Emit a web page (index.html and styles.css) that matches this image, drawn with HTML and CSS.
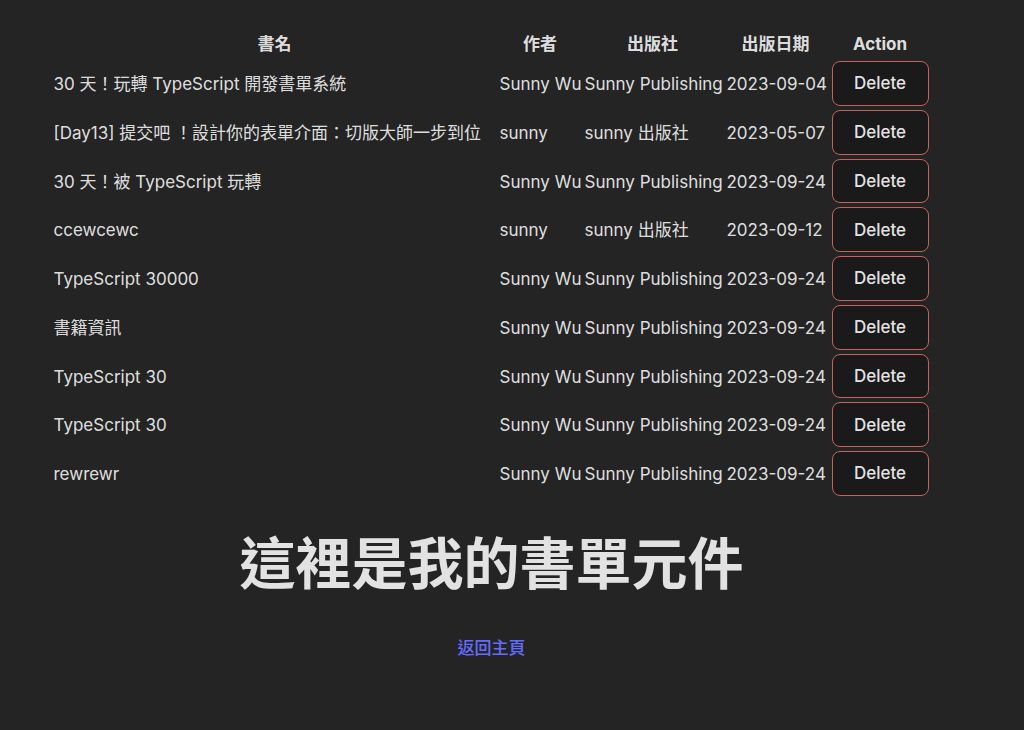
FILE: index.html
```html
<!DOCTYPE html>
<html lang="zh-Hant">
<head>
<meta charset="utf-8">
<title>書單</title>
<link rel="stylesheet" href="styles.css">
</head>
<body>
<div class="page">
  <table class="books">
    <colgroup>
      <col class="c-title"><col class="c-author"><col class="c-pub"><col class="c-date"><col class="c-act">
    </colgroup>
    <thead>
      <tr><th>書名</th><th>作者</th><th>出版社</th><th>出版日期</th><th>Action</th></tr>
    </thead>
    <tbody>
      <tr><td>30 天！玩轉 TypeScript 開發書單系統</td><td>Sunny Wu</td><td>Sunny Publishing</td><td class="date">2023-09-04</td><td class="act"><button class="del">Delete</button></td></tr>
      <tr><td>[Day13] 提交吧 ！設計你的表單介面：切版大師一步到位</td><td>sunny</td><td>sunny 出版社</td><td class="date">2023-05-07</td><td class="act"><button class="del">Delete</button></td></tr>
      <tr><td>30 天！被 TypeScript 玩轉</td><td>Sunny Wu</td><td>Sunny Publishing</td><td class="date">2023-09-24</td><td class="act"><button class="del">Delete</button></td></tr>
      <tr><td>ccewcewc</td><td>sunny</td><td>sunny 出版社</td><td class="date">2023-09-12</td><td class="act"><button class="del">Delete</button></td></tr>
      <tr><td>TypeScript 30000</td><td>Sunny Wu</td><td>Sunny Publishing</td><td class="date">2023-09-24</td><td class="act"><button class="del">Delete</button></td></tr>
      <tr><td>書籍資訊</td><td>Sunny Wu</td><td>Sunny Publishing</td><td class="date">2023-09-24</td><td class="act"><button class="del">Delete</button></td></tr>
      <tr><td>TypeScript 30</td><td>Sunny Wu</td><td>Sunny Publishing</td><td class="date">2023-09-24</td><td class="act"><button class="del">Delete</button></td></tr>
      <tr><td>TypeScript 30</td><td>Sunny Wu</td><td>Sunny Publishing</td><td class="date">2023-09-24</td><td class="act"><button class="del">Delete</button></td></tr>
      <tr><td>rewrewr</td><td>Sunny Wu</td><td>Sunny Publishing</td><td class="date">2023-09-24</td><td class="act"><button class="del">Delete</button></td></tr>
    </tbody>
  </table>
  <h1 class="title">這裡是我的書單元件</h1>
  <a class="home" href="#">返回主頁</a>
</div>
</body>
</html>
```
FILE: styles.css
```css
html, body {
  margin: 0;
  padding: 0;
  background: #242424;
}
body {
  color: rgba(255, 255, 255, 0.87);
  font-family: Inter, "Noto Sans CJK TC", sans-serif;
  font-size: 17px;
  line-height: 1.5;
  min-height: 730px;
}
.page {
  width: 983px;
  display: flex;
  flex-direction: column;
  align-items: center;
  padding-top: 28px;
}
.books {
  table-layout: fixed;
  width: 882px;
  border-collapse: separate;
  border-spacing: 2px;
}
.c-title { width: 444px; }
.c-author { width: 83px; }
.c-pub { width: 138px; }
.c-date { width: 104px; }
.c-act { width: 101px; }
.books th {
  font-weight: 700;
  text-align: center;
  padding: 2px 1px;
  line-height: 24px;
}
.books td {
  padding: 3px 1px 0;
  text-align: left;
  white-space: nowrap;
  vertical-align: middle;
  font-weight: 400;
}
.books td.date {
  padding-left: 3px;
}
.books td.act {
  padding: 1px;
}
.del {
  display: block;
  margin: 0 auto;
  width: 97px;
  height: 44.75px;
  border-radius: 8px;
  border: 1px solid #c4625b;
  background: #1a1a1a;
  color: rgba(255, 255, 255, 0.9);
  font-family: Inter, "Noto Sans CJK TC", sans-serif;
  font-size: 17px;
  font-weight: 500;
  padding: 0;
  cursor: pointer;
}
.title {
  margin: 35px 0 0;
  font-size: 56px;
  line-height: 1.1;
  font-weight: 700;
}
.home {
  margin-top: 41px;
  color: #646cff;
  font-weight: 500;
  text-decoration: none;
}
```
